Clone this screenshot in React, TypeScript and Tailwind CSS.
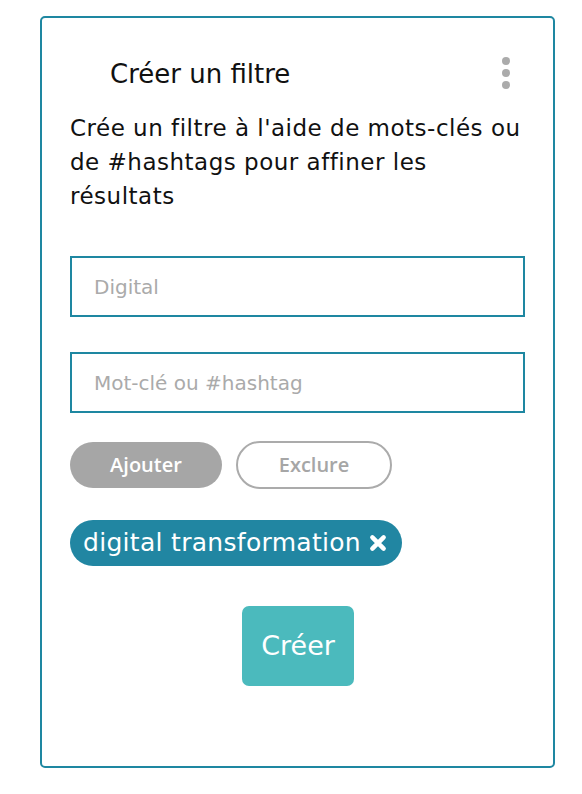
import { useState } from 'react';

export default function App() {
  const [keyword, setKeyword] = useState('');
  const [tags, setTags] = useState<string[]>(['digital transformation']);

  const removeTag = (tag: string) => {
    setTags(prev => prev.filter(t => t !== tag));
  };

  return (
    <div className="min-h-screen bg-white pt-[16px] pl-[40px]" style={{ fontFamily: '"DejaVu Sans", "Noto Sans", sans-serif' }}>
      <div className="w-[515px] h-[752px] border-2 border-[#1e87a1] rounded-[5px] px-[28px] flex flex-col">
        {/* Header */}
        <div className="flex items-center justify-between h-[50px] mt-[31px]">
          <h1 className="pl-[40px] text-[26px] text-[#111] font-normal leading-none">Créer un filtre</h1>
          <button className="flex flex-col gap-[4px] mr-[15px] mt-[-2px]" aria-label="Options">
            <span className="w-[8px] h-[8px] rounded-full bg-[#ababab]" />
            <span className="w-[8px] h-[8px] rounded-full bg-[#ababab]" />
            <span className="w-[8px] h-[8px] rounded-full bg-[#ababab]" />
          </button>
        </div>

        <p className="text-[23px] leading-[34px] tracking-[0.5px] text-[#111] mt-[12px]">
          Crée un filtre à l'aide de mots-clés ou
          <br />
          de #hashtags pour affiner les
          <br />
          résultats
        </p>

        {/* Inputs */}
        <input
          className="mt-[43px] h-[61px] w-full border-2 border-[#1e87a1] px-[22px] text-[20px] text-[#333] placeholder:text-[#aaa] outline-none"
          placeholder="Digital"
        />
        <input
          autoFocus
          className="mt-[35px] h-[61px] w-full border-2 border-[#1e87a1] px-[22px] text-[20px] text-[#333] placeholder:text-[#aaa] outline-none caret-[#777]"
          placeholder="Mot-clé ou #hashtag"
          value={keyword}
          onChange={e => setKeyword(e.target.value)}
        />

        {/* Actions */}
        <div className="flex items-center gap-[14px] mt-[28px]" style={{ fontFamily: '"Open Sans", "Noto Sans", sans-serif' }}>
          <button
            className="w-[152px] h-[46px] rounded-full bg-[#a6a6a6] text-white text-[20px] font-semibold"
            onClick={() => {
              if (keyword.trim()) {
                setTags(prev => [...prev, keyword.trim()]);
                setKeyword('');
              }
            }}
          >
            Ajouter
          </button>
          <button className="w-[156px] h-[48px] rounded-full border-2 border-[#ababab] text-[#a6a6a6] text-[20px] font-semibold">
            Exclure
          </button>
        </div>

        {/* Tags */}
        <div className="flex flex-wrap gap-2 mt-[31px]">
          {tags.map(tag => (
            <span
              key={tag}
              className="inline-flex items-center h-[46px] rounded-full bg-[#2186a2] text-white text-[25px] tracking-[0.3px] pl-[13px] pr-[15px]"
            >
              {tag}
              <button onClick={() => removeTag(tag)} className="ml-[8px]" aria-label="Supprimer">
                <svg width="18" height="18" viewBox="0 0 16 16">
                  <path d="M3 3 L13 13 M13 3 L3 13" stroke="white" strokeWidth="4" strokeLinecap="round" />
                </svg>
              </button>
            </span>
          ))}
        </div>

        <div className="flex justify-center mt-[40px]">
          <button className="w-[112px] h-[80px] rounded-[7px] bg-[#4bbabd] text-white text-[27px] ml-[1px]">
            Créer
          </button>
        </div>
      </div>
    </div>
  );
}
